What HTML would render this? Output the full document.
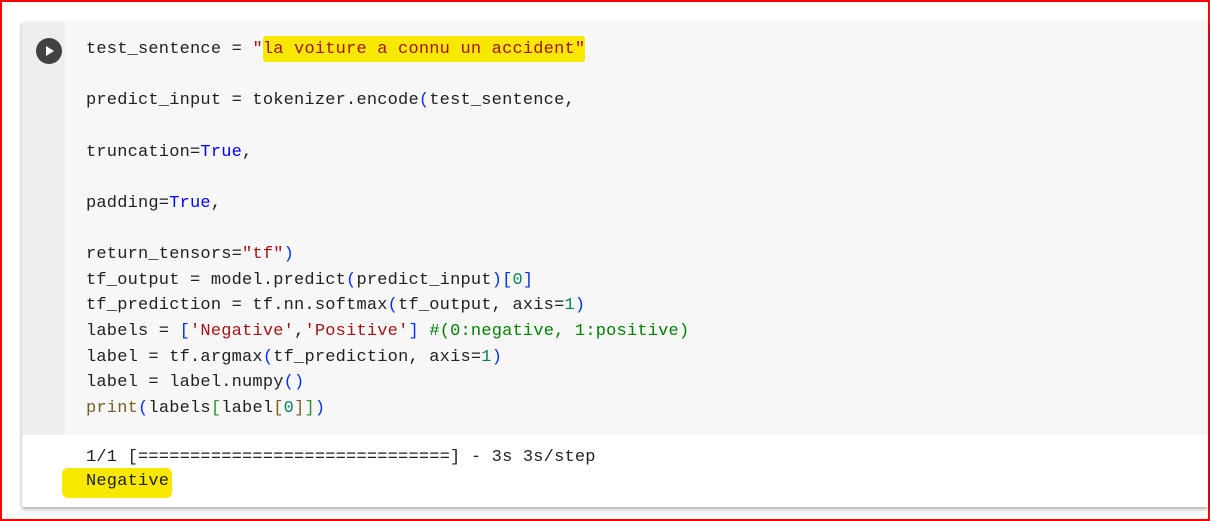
<!DOCTYPE html>
<html><head><meta charset="utf-8"><style>
html,body{margin:0;padding:0;}
body{width:1210px;height:521px;position:relative;background:#fff;overflow:hidden;font-family:"Liberation Mono",monospace;}
.frame{position:absolute;left:0;top:0;width:1206px;height:517px;border:2px solid #f00;border-right-width:3px;}
.cell{position:absolute;left:22px;top:22px;width:1186px;height:485px;background:#fff;box-shadow:0 2px 4px rgba(0,0,0,.35);}
.code{position:absolute;left:0;top:0;width:1186px;height:413px;background:#f7f7f7;}
.gutter{position:absolute;left:0;top:0;width:43px;height:413px;background:#eeeeee;}
.run{position:absolute;left:14px;top:16px;width:26px;height:26px;border-radius:50%;background:#424242;}
.run:after{content:"";position:absolute;left:10px;top:8px;border-left:8px solid #fff;border-top:5px solid transparent;border-bottom:5px solid transparent;}
.l{position:absolute;left:86px;font-size:17px;line-height:20px;color:#212121;white-space:pre;letter-spacing:0.2px;}
.s{color:#a31515}.k{color:#0000ff}.n{color:#098658}.c{color:#008000}.b{color:#0431fa}.g{color:#319331}.f{color:#795e26}
.hl{position:absolute;background:#f8e800;border-radius:3px;}
</style></head><body>
<div class="frame"></div>
<div class="cell"><div class="code"><div class="gutter"></div><div class="run"></div></div></div>
<div class="hl" style="left:263px;top:36px;width:322px;height:26px;"></div>
<div class="hl" style="left:62px;top:468px;width:110px;height:30px;border-radius:6px;"></div>
<div class="l" style="top:40px">test_sentence = <span class="s">"la voiture a connu un accident"</span></div>
<div class="l" style="top:91px">predict_input = tokenizer.encode<span class="b">(</span>test_sentence,</div>
<div class="l" style="top:143px">truncation=<span class="k">True</span>,</div>
<div class="l" style="top:194px">padding=<span class="k">True</span>,</div>
<div class="l" style="top:245px">return_tensors=<span class="s">"tf"</span><span class="b">)</span></div>
<div class="l" style="top:271px">tf_output = model.predict<span class="b">(</span>predict_input<span class="b">)[</span><span class="n">0</span><span class="b">]</span></div>
<div class="l" style="top:296px">tf_prediction = tf.nn.softmax<span class="b">(</span>tf_output, axis=<span class="n">1</span><span class="b">)</span></div>
<div class="l" style="top:322px">labels = <span class="b">[</span><span class="s">'Negative'</span>,<span class="s">'Positive'</span><span class="b">]</span> <span class="c">#(0:negative, 1:positive)</span></div>
<div class="l" style="top:348px">label = tf.argmax<span class="b">(</span>tf_prediction, axis=<span class="n">1</span><span class="b">)</span></div>
<div class="l" style="top:373px">label = label.numpy<span class="b">()</span></div>
<div class="l" style="top:399px"><span class="f">print</span><span class="b">(</span>labels<span class="g">[</span>label<span class="f">[</span><span class="n">0</span><span class="f">]</span><span class="g">]</span><span class="b">)</span></div>
<div class="l" style="top:448px">1/1 [==============================] - 3s 3s/step</div>
<div class="l" style="top:472px">Negative</div>
</body></html>
